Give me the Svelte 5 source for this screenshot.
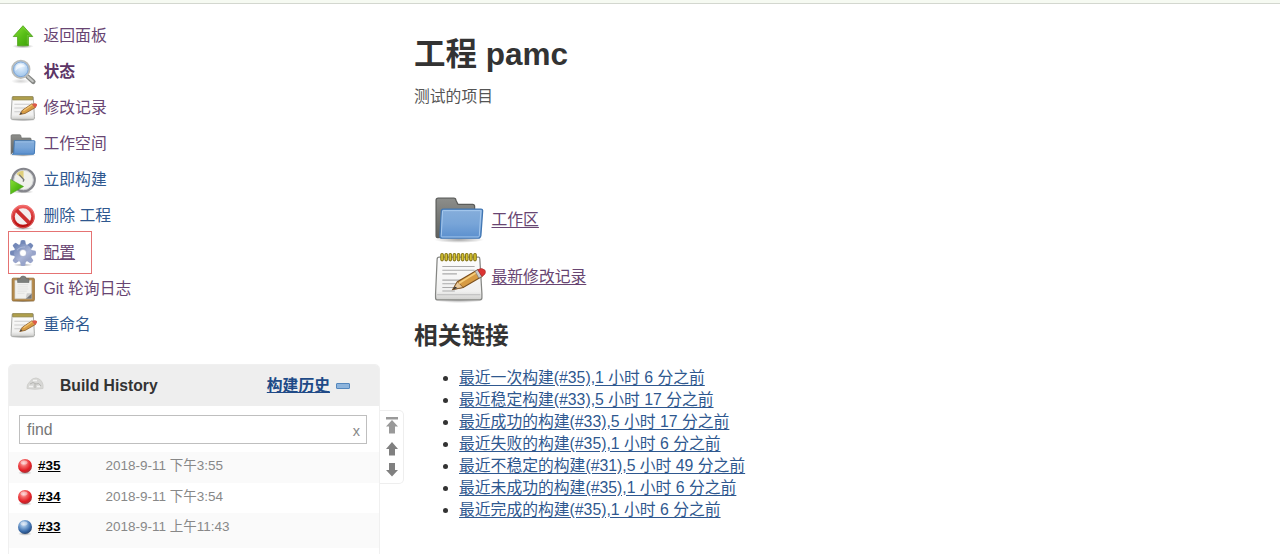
<script>
  const tasks = [
    { icon: 'up', label: '返回面板', seen: true },
    { icon: 'search', label: '状态', seen: true, bold: true },
    { icon: 'note', label: '修改记录', seen: true },
    { icon: 'smallfolder', label: '工作空间', seen: true },
    { icon: 'clock', label: '立即构建' },
    { icon: 'stop', label: '删除 工程' },
    { icon: 'gear', label: '配置', seen: true, marked: true },
    { icon: 'clipboard', label: 'Git 轮询日志', seen: true },
    { icon: 'note', label: '重命名' }
  ];
  const builds = [
    { id: '#35', time: '2018-9-11 下午3:55', ball: 'red' },
    { id: '#34', time: '2018-9-11 下午3:54', ball: 'red' },
    { id: '#33', time: '2018-9-11 上午11:43', ball: 'blue' }
  ];
  const links = [
    '最近一次构建(#35),1 小时 6 分之前',
    '最近稳定构建(#33),5 小时 17 分之前',
    '最近成功的构建(#33),5 小时 17 分之前',
    '最近失败的构建(#35),1 小时 6 分之前',
    '最近不稳定的构建(#31),5 小时 49 分之前',
    '最近未成功的构建(#35),1 小时 6 分之前',
    '最近完成的构建(#35),1 小时 6 分之前'
  ];
  const teeth = [0, 45, 90, 135, 180, 225, 270, 315];
  const coils = [0, 1, 2, 3, 4, 5, 6, 7, 8];
</script>

<svg class="defs" width="0" height="0" aria-hidden="true">
  <defs>
    <linearGradient id="green" x1="0" y1="0" x2="1" y2="1"><stop offset="0" stop-color="#8ae234" /><stop offset=".5" stop-color="#57bd17" /><stop offset="1" stop-color="#3c9d08" /></linearGradient>
    <linearGradient id="sky" x1="0" y1="0" x2="0" y2="1"><stop offset="0" stop-color="#86aedb" /><stop offset=".5" stop-color="#78a5d8" /><stop offset="1" stop-color="#5a8fce" /></linearGradient>
    <linearGradient id="grey" x1="0" y1="0" x2="0" y2="1"><stop offset="0" stop-color="#8d8e8b" /><stop offset="1" stop-color="#5f615e" /></linearGradient>
    <linearGradient id="paper" x1="0" y1="0" x2="0" y2="1"><stop offset="0" stop-color="#fdfdfd" /><stop offset=".8" stop-color="#f0f0ef" /><stop offset="1" stop-color="#cfcfcd" /></linearGradient>
    <linearGradient id="ban" x1="0" y1="0" x2="0" y2="1"><stop offset="0" stop-color="#ef5a5a" /><stop offset="1" stop-color="#b80c0c" /></linearGradient>
    <linearGradient id="steel" gradientUnits="userSpaceOnUse" x1="6" y1="2" x2="42" y2="44"><stop offset="0" stop-color="#6079ad" /><stop offset=".6" stop-color="#a9b4d6" /><stop offset="1" stop-color="#8490b5" /></linearGradient>
    <radialGradient id="lens" cx=".5" cy=".35"><stop offset="0" stop-color="#e9f4ff" /><stop offset="1" stop-color="#a9cbed" /></radialGradient>
    <radialGradient id="redball" cx=".4" cy=".3" r=".7"><stop offset="0" stop-color="#ffc5c5" /><stop offset=".35" stop-color="#f26464" /><stop offset=".75" stop-color="#e21d24" /><stop offset="1" stop-color="#a9343a" /></radialGradient>
    <radialGradient id="blueball" cx=".4" cy=".3" r=".7"><stop offset="0" stop-color="#d5e4f5" /><stop offset=".35" stop-color="#83abd6" /><stop offset=".75" stop-color="#3769a8" /><stop offset="1" stop-color="#2a4a76" /></radialGradient>
    <radialGradient id="shade"><stop offset="0" stop-color="#000" stop-opacity=".35" /><stop offset="1" stop-color="#000" stop-opacity="0" /></radialGradient>
  </defs>
</svg>

{#snippet icon(name, size)}
  <svg width={size} height={size} viewBox="0 0 48 48" aria-hidden="true">
    {#if name === 'up'}
      <ellipse cx="24" cy="43" rx="20" ry="4" fill="url(#shade)" />
      <path d="M24 5 42 25H34V42H14V25H6Z" fill="url(#green)" stroke="#4da319" stroke-width="1.5" stroke-linejoin="round" />
      <path d="M24 8 38 23H32V39" fill="none" stroke="#a5e76c" stroke-width="1" opacity=".6" />
    {:else if name === 'search'}
      <ellipse cx="20" cy="41" rx="18" ry="5" fill="url(#shade)" opacity=".5" />
      <path d="M32 32 43 42" stroke="#858784" stroke-width="8.5" stroke-linecap="round" />
      <path d="M33 33 42 41" stroke="#c6c7c5" stroke-width="4" stroke-linecap="round" />
      <circle cx="20" cy="19" r="16" fill="url(#lens)" stroke="#b9bbb9" stroke-width="3.5" />
      <circle cx="20" cy="19" r="13.5" fill="none" stroke="#7ba5d6" stroke-width="1.8" />
      <path d="M10 19Q10 10 19 9Q26 9 28 14Q18 14 10 22Z" fill="#fff" opacity=".65" />
    {:else if name === 'note'}
      <ellipse cx="24" cy="46" rx="24" ry="3" fill="url(#shade)" />
      <path d="M4 4H43L45 40V43Q45 45 43 45H4Q2 45 2 43V40Z" fill="url(#paper)" stroke="#a5a6a3" stroke-width="1.8" />
      <path d="M8 17H37M8 24H28M8 31H20" stroke="#ccc" stroke-width="2" />
      <path d="M5 3H42V9H5Z" fill="#b0a04c" stroke="#8e8246" stroke-width="1.5" />
      <path d="M18 36 23 28 41 16 47 23 28 34Z" fill="#d79b43" stroke="#8f6432" stroke-width="1.6" />
      <path d="M18 36 20 32 23 34Z" fill="#444" />
      <path d="M25 29 41 18" stroke="#f1c675" stroke-width="2" />
      <path d="M41 17Q46 13 50 17Q51 21 46 24Z" fill="#dc5a4a" />
    {:else if name === 'notepad'}
      <ellipse cx="24" cy="46" rx="24" ry="3" fill="url(#shade)" />
      <path d="M5 5H43Q44 5 44 7L46 40V44Q46 46 44 46H3Q1.500 46 1.500 44V40L3 7Q3 5 5 5Z" fill="url(#paper)" stroke="#858683" stroke-width="1.2" />
      <path d="M3 41H44.500" stroke="#bbb" />
      <path d="M8 14H39M8 17.500H39M8 21H22M8 27H30M8 30.500H27M8 34H20M8 37.500H20" stroke="#aaa" stroke-width="1" />
      {#each coils as n}
        <rect x={6.5 + n * 3.95} y="1.5" width="2.5" height="7" rx="1.2" fill="#d8c52f" stroke="#877718" stroke-width="1" />
      {/each}
      <path d="M18 36 22.500 28.500 42 17 46 23.500 28 34Z" fill="#d79b43" stroke="#7c501f" stroke-width="1" />
      <path d="M18 36 22.500 28.500 28 34Z" fill="#e9c99b" stroke="#7c501f" stroke-width=".7" />
      <path d="M18 36 20 33 22.500 34.600Z" fill="#333" />
      <path d="M24 30 41 19.500" stroke="#f5cd7b" stroke-width="1.6" />
      <path d="M39.500 18.500 42 17 46 23.500 43 25Z" fill="#ccc" stroke="#777" stroke-width=".6" />
      <path d="M42 17Q46 14.500 49 17.500Q50.500 21 46 23.500Z" fill="#dc3433" stroke="#a52b28" stroke-width=".6" />
    {:else if name === 'smallfolder'}
      <ellipse cx="24" cy="45" rx="24" ry="2.5" fill="url(#shade)" />
      <path d="M2 43V9Q2 7 4 7H18Q20 7 20 9L21 13H37Q39 13 39 15V40H4Z" fill="url(#grey)" stroke="#6c6d6b" stroke-width="1.3" />
      <path d="M8 18H45Q46 18 46 20L45 41Q45 43 43 43H4Q7 43 7 40Z" fill="url(#sky)" stroke="#4077b4" stroke-width="1.8" />
      <path d="M9 20H44" stroke="#a8caef" stroke-width="1.3" />
    {:else if name === 'folder'}
      <ellipse cx="24" cy="43" rx="24" ry="3" fill="url(#shade)" />
      <path d="M2 39V5Q2 3 4 3H19Q21 3 21 5L23 9H37Q39 9 39 11V39L4 41Q2 41 2 39Z" fill="url(#grey)" stroke="#5b5c5a" stroke-width="1.2" />
      <path d="M9 13.500H45Q47 13.500 46.700 15.500L45 39Q44.500 41.500 42.500 41.500H7Q5.500 41.500 5.700 39L7 15.500Q7 13.500 9 13.500Z" fill="url(#sky)" stroke="#4176b2" stroke-width="1.2" />
      <path d="M9 15H45L43.500 39Q43.300 40.300 42.500 40.300H7.500Q6.800 40.300 7 39L8.200 15.500Z" fill="none" stroke="#a8caef" stroke-width=".9" />
    {:else if name === 'clock'}
      <ellipse cx="24" cy="46" rx="20" ry="3" fill="url(#shade)" />
      <circle cx="25" cy="24" r="20.500" fill="#eff0ec" stroke="#85868c" stroke-width="4.500" />
      <circle cx="25" cy="24" r="18" fill="none" stroke="#cbccd0" stroke-width="1.8" />
      <path d="M25 23 12 13Q17 7 25 7Z" fill="#dfcf7c" />
      <path d="M26 24 17 14M26 23 24 27" stroke="#777" stroke-width="2.300" />
      <path d="M1 23 25 36 1 50Z" fill="url(#green)" stroke="#459c18" stroke-width="1" />
    {:else if name === 'stop'}
      <ellipse cx="24" cy="47" rx="20" ry="3" fill="url(#shade)" />
      <circle cx="24" cy="25" r="18.500" fill="#f3eeee" stroke="url(#ban)" stroke-width="6.500" />
      <path d="M12 13 36 37" stroke="#cc2f2f" stroke-width="7" />
      <circle cx="24" cy="25" r="20.500" fill="none" stroke="#f18b8b" stroke-width="1" />
    {:else if name === 'gear'}
      <ellipse cx="24" cy="46" rx="18" ry="3" fill="url(#shade)" />
      {#each teeth as turn}
        <path d="M18 12 20 1Q24 -1 28 1L30 12Z" transform="rotate({turn} 24 24)" fill={turn > 45 && turn < 270 ? '#98a4ca' : '#7388b8'} />
      {/each}
      <circle cx="24" cy="24" r="11.500" fill="none" stroke="url(#steel)" stroke-width="11" />
      <circle cx="24" cy="24" r="6.5" fill="#fff" stroke="#8592b8" />
      <path d="M13 19Q18 12 28 13" fill="none" stroke="#cbd3ea" stroke-width="2" opacity=".5" />
    {:else if name === 'clipboard'}
      <ellipse cx="24" cy="47" rx="23" ry="2" fill="url(#shade)" />
      <rect x="4" y="4" width="41" height="42" rx="2" fill="#b58a4b" stroke="#8d6731" stroke-width="1.500" />
      <path d="M9 8H40V42H9Z" fill="#f1f1ef" stroke="#c5c5c0" />
      <path d="M14 16H34M14 20H33M14 24H34M14 28H31M14 32H27" stroke="#ddd" stroke-width="1.300" />
      <path d="M40 32V42H29Z" fill="#777" /><path d="M29 42 31 32H40Z" fill="#ccc" />
      <path d="M14 12V5H19Q19 0 24 0Q30 0 30 5H35V12Z" fill="#7c7f7c" stroke="#606360" />
    {/if}
  </svg>
{/snippet}

<div class="topline"></div>
<div class="page">
  <aside>
    <nav>
      {#each tasks as task}
        <a href="#top" class="task" class:seen={task.seen} class:bold={task.bold} class:marked={task.marked}>
          {@render icon(task.icon, 26)}<span>{task.label}</span>
        </a>
      {/each}
    </nav>

    <section class="history">
      <header>
        <svg class="weather" width="18" height="14" viewBox="0 0 18 14" aria-hidden="true">
          <path d="M1 11.500Q.5 7 4 4.500Q6 1 10 1Q16 2 17 8V11.500Q9 13 1 11.500Z" fill="#d7d7d5" stroke="#d0d0cd" />
          <path d="M4 7Q7 4 10 7Q13 5 15 9M9 7V11" fill="none" stroke="#b5b5b1" />
          <path d="M3 9.500H7M11 9.500H14M7 3.500H11" stroke="#f3f3f2" stroke-width="1.500" />
        </svg>
        <b>Build History</b>
        <a class="trend" href="#history">构建历史</a>
        <i class="collapse"></i>
      </header>
      <div class="find"><span>find</span><span class="clear">x</span></div>
      <div class="builds">
        {#each builds as build}
          <div class="build">
            <svg width="16" height="17" viewBox="0 0 16 17" aria-hidden="true">
              <ellipse cx="8" cy="14.800" rx="7" ry="2" fill="url(#shade)" />
              <circle cx="8" cy="8" r="7" fill="url(#{build.ball}ball)" />
              <ellipse cx="7" cy="4.500" rx="3.500" ry="2" fill="#fff" opacity=".4" />
            </svg>
            <a href="#build">{build.id}</a>
            <span>{build.time}</span>
          </div>
        {/each}
      </div>
    </section>
  </aside>

  <div class="pager">
    <svg width="14" height="17" viewBox="0 0 14 17" fill="#999"><path d="M1 0H13V2.500H1ZM7 3 13 9.500H10V16.500H4V9.500H1Z" /></svg>
    <svg width="14" height="14" viewBox="0 0 14 14" fill="#808080"><path d="M7 0 13 7H10V13.500H4V7H1Z" /></svg>
    <svg width="14" height="14" viewBox="0 0 14 14" fill="#808080"><path d="M7 13.500 13 7H10V0H4V7H1Z" /></svg>
  </div>

  <main>
    <h1>工程 pamc</h1>
    <p>测试的项目</p>
    <div class="shortcut">{@render icon('folder', 50)}<a href="#ws">工作区</a></div>
    <div class="shortcut">{@render icon('notepad', 50)}<a href="#changes">最新修改记录</a></div>
    <h2>相关链接</h2>
    <ul>
      {#each links as link}
        <li><a href="#build">{link}</a></li>
      {/each}
    </ul>
  </main>
</div>

<style>
  :global(body) {
    margin: 0;
    overflow: hidden;
    background: #fff;
    color: #333;
    font: 15.8px/22px "Liberation Sans", "Noto Sans CJK SC", sans-serif;
  }
  .defs { display: block; }
  .topline { height: 3px; background: #f6faf2; border-bottom: 1px solid #d3d7cf; }
  .page { display: flex; align-items: flex-start; height: 550px; overflow: hidden; }
  a { color: #2f588f; }
  aside { width: 372px; padding: 14px 0 0 8px; }
  nav { display: flex; flex-direction: column; height: 346px; }
  .task {
    display: flex;
    align-items: center;
    box-sizing: border-box;
    height: 36px;
    padding-left: 2px;
    text-decoration: none;
  }
  .task svg { flex: none; margin-right: 7.5px; overflow: visible; }
  .seen { color: #684572; }
  .bold { font-weight: bold; color: #5c3566; }
  .marked {
    width: 84px;
    height: 43px;
    margin: -3px 0;
    padding-left: 1px;
    border: 1px solid #e57373;
    text-decoration: underline;
  }
  .history {
    box-sizing: border-box;
    height: 200px;
    border: 1px solid #f0f0f0;
    border-radius: 5px 5px 0 0;
  }
  header {
    display: flex;
    align-items: center;
    height: 41px;
    padding: 0 29px 0 17px;
    background: #eee;
    border-radius: 4px 4px 0 0;
  }
  .weather { margin-top: -3px; }
  header b { margin: 0 0 0 16px; font-size: 15.7px; }
  .trend { margin-left: auto; color: #204a87; font-weight: bold; }
  .collapse {
    box-sizing: border-box;
    width: 14px;
    height: 6px;
    margin-left: 6px;
    background: #8db4dc;
    border: 1px solid #5487bd;
    border-radius: 1px;
  }
  .find {
    display: flex;
    justify-content: space-between;
    align-items: center;
    box-sizing: border-box;
    height: 29px;
    margin: 9px 12px 8px 10px;
    padding: 0 6px 0 7px;
    border: 1px solid #bfbfbf;
    color: #777;
  }
  .clear { padding-top: 2px; color: #888; font-size: 14.5px; }
  .build {
    display: flex;
    align-items: center;
    box-sizing: border-box;
    height: 30.5px;
    padding: 0 0 2px 8px;
    font-size: 13.5px;
  }
  .build:nth-child(odd) { background: #fafafa; }
  .build:last-child { height: 35px; padding-bottom: 7px; }
  .build a { width: 67.5px; margin-left: 5px; color: #000; font-weight: bold; }
  .build span { color: #888; }
  .build svg { flex: none; margin-top: 1px; }
  .pager {
    display: flex;
    flex-direction: column;
    align-items: center;
    box-sizing: border-box;
    width: 24px;
    height: 74px;
    margin-top: 406px;
    padding-top: 6px;
    gap: 7.5px;
    border: 1px solid #eee;
    border-left: 0;
    border-radius: 0 5px 5px 0;
  }
  main { padding: 29.5px 0 0 10px; }
  h1 { margin: 0; font-size: 31.5px; line-height: 40px; }
  p { margin: 12px 0 83.5px; color: #555; }
  .shortcut { display: flex; align-items: center; gap: 7.5px; height: 57px; padding-left: 20px; }
  .shortcut svg { flex: none; overflow: visible; }
  .shortcut a { color: #684572; }
  h2 { margin: 15.5px 0 16px; font-size: 23.7px; line-height: 30px; }
  ul { margin: 0; padding-left: 45px; }
  li { height: 22px; white-space: nowrap; }
  li a, .shortcut a { text-underline-offset: 2px; }
</style>
